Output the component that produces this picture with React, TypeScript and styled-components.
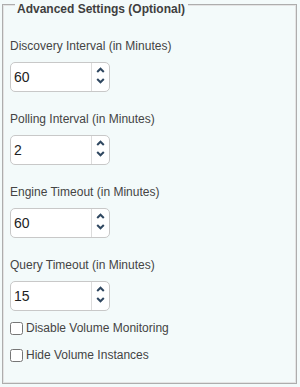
import React from 'react';
import styled, { createGlobalStyle } from 'styled-components';

const GlobalStyle = createGlobalStyle`
  html, body {
    margin: 0;
    padding: 0;
    background: #f3fafa;
    font-family: 'Liberation Sans', Arial, sans-serif;
  }
`;

type IntervalField = {
  label: string;
  value: string;
};

const fields: IntervalField[] = [
  { label: 'Discovery Interval (in Minutes)', value: '60' },
  { label: 'Polling Interval (in Minutes)', value: '2' },
  { label: 'Engine Timeout (in Minutes)', value: '60' },
  { label: 'Query Timeout (in Minutes)', value: '15' },
];

const options = ['Disable Volume Monitoring', 'Hide Volume Instances'];

function Chevron({ up }: { up?: boolean }) {
  return (
    <svg width="9" height="6" viewBox="0 0 9 6">
      <polyline
        points={up ? '1.2,5 4.5,1.7 7.8,5' : '1.2,1 4.5,4.3 7.8,1'}
        fill="none"
        stroke="#2f4760"
        strokeWidth="2"
      />
    </svg>
  );
}

function NumberSpinner({ value }: { value: string }) {
  return (
    <Spinner>
      <Field type="text" defaultValue={value} />
      <Arrows>
        <Chevron up />
        <Chevron />
      </Arrows>
    </Spinner>
  );
}

export default function App() {
  return (
    <>
      <GlobalStyle />
      <Panel>
        <Legend>Advanced Settings (Optional)</Legend>
        <Groups>
          {fields.map((f) => (
            <Group key={f.label}>
              <Label>{f.label}</Label>
              <NumberSpinner value={f.value} />
            </Group>
          ))}
        </Groups>
        <Checks>
          {options.map((o) => (
            <CheckRow key={o}>
              <CheckBox type="checkbox" />
              {o}
            </CheckRow>
          ))}
        </Checks>
      </Panel>
    </>
  );
}

// a fieldset look: dark outer line, light inner line
const Panel = styled.section`
  margin: 4px 3px 0 2px;
  border: 1px solid #adadad;
  box-shadow: inset 0 0 0 1px #e4e4e4;
  padding: 0 7px 21px 7px;
`;

const Legend = styled.div`
  width: fit-content;
  margin: -3px 0 0 5px;
  padding: 0 3px 0 2px;
  background: #f3fafa;
  font-size: 12px;
  line-height: 14px;
  font-weight: 700;
  color: #3f3f3f;
`;

const Groups = styled.div`
  margin-top: 23px;
  display: flex;
  flex-direction: column;
  gap: 20px;
`;

const Group = styled.div`
  display: flex;
  flex-direction: column;
  gap: 9px;
`;

const Label = styled.label`
  display: block;
  font-size: 12px;
  line-height: 14px;
  color: #444;
`;

const Spinner = styled.div`
  display: flex;
  box-sizing: border-box;
  width: 100px;
  height: 30px;
  border: 1px solid #c8c8c8;
  border-radius: 5px;
  background: #fff;
  overflow: hidden;
`;

const Field = styled.input`
  flex: 1;
  min-width: 0;
  border: 0;
  outline: none;
  padding: 0 0 0 3px;
  margin: 0;
  background: transparent;
  font-family: 'Liberation Sans', Arial, sans-serif;
  font-size: 14px;
  color: #222;
`;

const Arrows = styled.div`
  box-sizing: border-box;
  width: 18px;
  border-left: 1px solid #dcdcdc;
  display: flex;
  flex-direction: column;
  align-items: center;
  justify-content: center;
  gap: 5px;
  padding-bottom: 3px;
`;

const Checks = styled.div`
  margin-top: 10px;
  display: flex;
  flex-direction: column;
  gap: 13px;
`;

const CheckRow = styled.label`
  display: flex;
  align-items: center;
  height: 14px;
  font-size: 12px;
  line-height: 14px;
  color: #444;
`;

const CheckBox = styled.input`
  width: 13px;
  height: 13px;
  margin: 0 3px 0 0;
`;
